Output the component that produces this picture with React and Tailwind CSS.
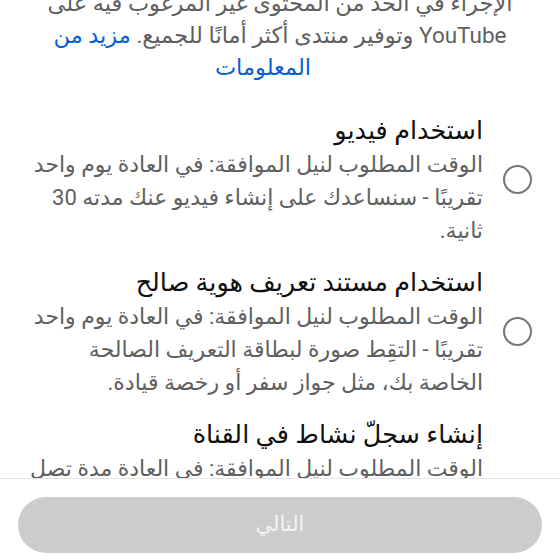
export default function App() {
  const options = [
    {
      title: 'استخدام فيديو',
      desc: 'الوقت المطلوب لنيل الموافقة: في العادة يوم واحد تقريبًا - سنساعدك على إنشاء فيديو عنك مدته 30 ثانية.',
    },
    {
      title: 'استخدام مستند تعريف هوية صالح',
      desc: 'الوقت المطلوب لنيل الموافقة: في العادة يوم واحد تقريبًا - التقِط صورة لبطاقة التعريف الصالحة الخاصة بك، مثل جواز سفر أو رخصة قيادة.',
    },
    {
      title: 'إنشاء سجلّ نشاط في القناة',
      desc: 'الوقت المطلوب لنيل الموافقة: في العادة مدة تصل إلى شهرين - يمكنك مواصلة استخدام قناتك ونشر المحتوى عليها، وسنراجع سجلّ النشاط فيها لاحقًا قبل منحك الموافقة.',
    },
  ]

  return (
    <div
      dir="rtl"
      className="h-[560px] w-[560px] bg-white flex flex-col overflow-hidden"
      style={{ fontFamily: 'Roboto, "DejaVu Sans", sans-serif' }}
    >
      <div className="h-[478px] overflow-hidden shrink-0">
        <div className="-mt-[13px]">
          <p className="px-[20px] text-center text-[22.5px] leading-[32px] text-[#606060] whitespace-nowrap">
            الإجراء في الحد من المحتوى غير المرغوب فيه على
            <br />
            YouTube وتوفير منتدى أكثر أمانًا للجميع.{' '}
            <a className="text-[#065fd4]">مزيد من</a>
            <br />
            <a className="inline-block mr-[34px] text-[#065fd4]">المعلومات</a>
          </p>

          <div className="mt-[29px] pr-[28px] pl-[20px] flex flex-col gap-[17px]">
            {options.map((o) => (
              <div key={o.title} className="flex items-center gap-[20px]">
                <div className="w-[29px] h-[29px] shrink-0 rounded-full border-2 border-[#757575]" />
                <div className="flex-1">
                  <div className="text-[25.5px] leading-[36px] text-[#0f0f0f]">{o.title}</div>
                  <div className="text-[22px] leading-[33px] text-[#606060]">{o.desc}</div>
                </div>
              </div>
            ))}
          </div>
        </div>
      </div>

      <div className="flex-1 border-t border-[#e5e5e5] pt-[18px] px-[18px]">
        <button className="w-full h-[56px] rounded-full bg-[#cccccc] text-[21px] text-[#f4f4f4]">
          التالي
        </button>
      </div>
    </div>
  )
}
